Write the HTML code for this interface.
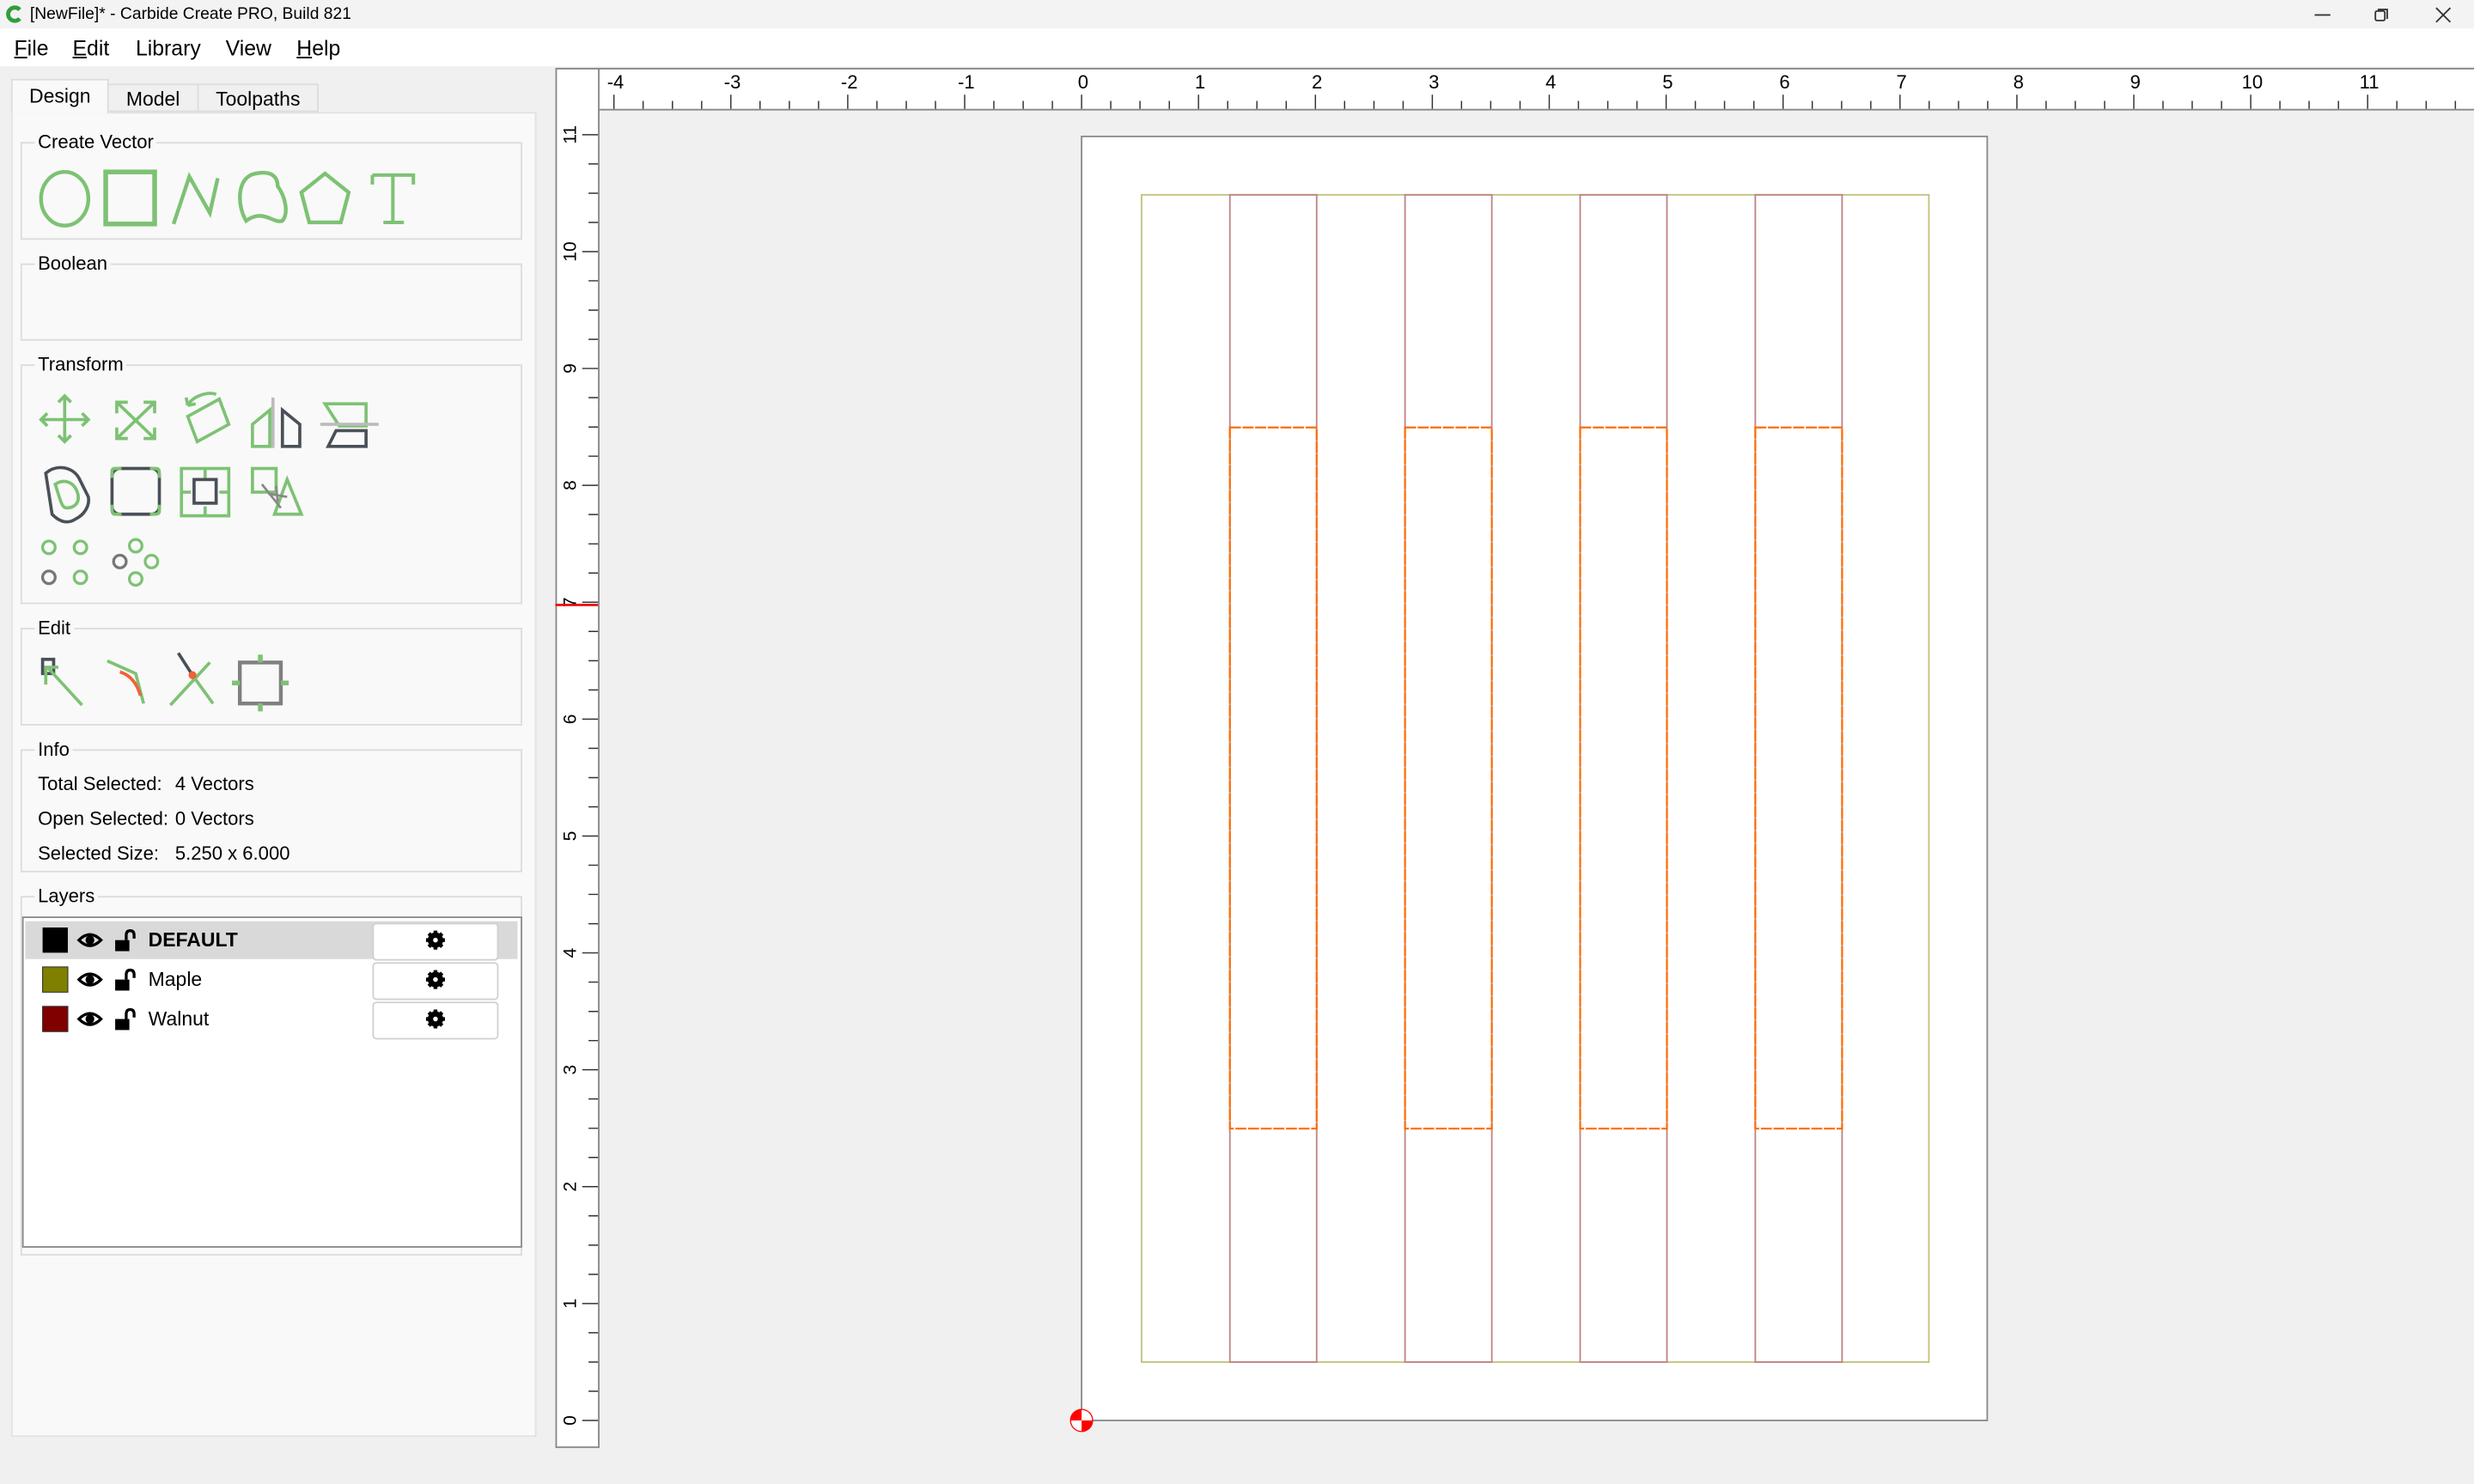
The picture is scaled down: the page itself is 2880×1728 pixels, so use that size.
<!DOCTYPE html>
<html><head><meta charset="utf-8">
<style>
*{margin:0;padding:0;box-sizing:border-box}
html,body{width:2880px;height:1728px;overflow:hidden;background:#f0f0f0}
#root{position:absolute;left:0;top:0;width:1568px;height:941px;transform:scale(1.83673);transform-origin:0 0;font-family:"Liberation Sans",sans-serif;color:#000;background:#f0f0f0}
.abs{position:absolute}
#title{left:0;top:0;width:1568px;height:18px;background:#f3f3f3;font-size:10.5px;line-height:18px}
#menu{left:0;top:18px;width:1568px;height:24px;background:#fff;font-size:13.5px;line-height:26px}
#menu span{position:absolute;top:0}
.tab{position:absolute;font-size:12.5px;text-align:center;border:1px solid #ddd}
#panel{left:7px;top:71px;width:333px;height:840px;background:#f9f9f9;border:1px solid #e2e2e2}
.grp{position:absolute;left:13px;width:318px;border:1px solid #dcdcdc}
.lbl{position:absolute;font-size:12px;background:#f9f9f9;padding:0 2px}
.info{position:absolute;font-size:12px}
</style></head><body><div id="root">
<div id="title" class="abs">
<svg class="abs" style="left:3px;top:3px" width="12" height="12" viewBox="0 0 12 12"><path d="M9.5 3.2A4.2 4.2 0 1 0 9.5 8.8" fill="none" stroke="#2f9e3a" stroke-width="2.6"/></svg>
<span class="abs" style="left:19px;top:0">[NewFile]* - Carbide Create PRO, Build 821</span>
<div class="abs" style="left:1467px;top:9px;width:10px;height:1px;background:#333"></div>
<svg class="abs" style="left:1504px;top:4px" width="11" height="11" viewBox="0 0 11 11"><rect x="1.5" y="3" width="6" height="6" rx="1" fill="none" stroke="#333"/><path d="M3.5 2.5V2h5.5v5.5h-0.5" fill="none" stroke="#333"/></svg>
<svg class="abs" style="left:1543px;top:4px" width="11" height="11" viewBox="0 0 11 11"><path d="M1 1L10 10M10 1L1 10" stroke="#333"/></svg>
</div>
<div id="menu" class="abs">
<span style="left:9px"><u>F</u>ile</span><span style="left:46px"><u>E</u>dit</span><span style="left:86px">Library</span><span style="left:143px">View</span><span style="left:188px"><u>H</u>elp</span>
</div>

<div id="panel" class="abs"></div>
<div class="tab" style="left:7px;top:50px;width:62px;height:22px;line-height:21px;background:#f9f9f9;border-bottom:none">Design</div>
<div class="tab" style="left:68px;top:53px;width:58px;height:18px;line-height:18px;background:#f0f0f0">Model</div>
<div class="tab" style="left:125px;top:53px;width:77px;height:18px;line-height:18px;background:#f0f0f0">Toolpaths</div>

<div class="grp" style="top:90px;height:62px"></div><span class="lbl" style="left:22px;top:83px">Create Vector</span>
<div class="grp" style="top:167px;height:49px"></div><span class="lbl" style="left:22px;top:160px">Boolean</span>
<div class="grp" style="top:231px;height:152px"></div><span class="lbl" style="left:22px;top:224px">Transform</span>
<div class="grp" style="top:398px;height:62px"></div><span class="lbl" style="left:22px;top:391px">Edit</span>
<div class="grp" style="top:475px;height:78px"></div><span class="lbl" style="left:22px;top:468px">Info</span>
<div class="grp" style="top:568px;height:228px"></div><span class="lbl" style="left:22px;top:561px">Layers</span>

<svg class="abs" style="left:0;top:0" width="345" height="470" viewBox="0 0 345 470" fill="none" stroke-width="2.4">
<g stroke="#7dc274">
<ellipse cx="41" cy="126" rx="15" ry="17"/>
<rect x="67" y="109" width="31" height="33" stroke-width="3"/>
<path d="M110 142L120 112L133 135L138 113"/>
<path d="M156 140C150 130 150 112 162 110C172 108 176 112 176 118C181 125 183 135 179 140C173 142 167 132 156 140Z"/>
<path d="M206 110L221 122L216 141L196 141L191 122Z"/>
<path d="M236 111H262V117M249 111V141M243 141H256M236 117V111" stroke-width="2.2"/>
</g>
<g stroke="#7dc274" stroke-width="2">
<path d="M41 251V280M26 266H56M37 255L41 251L45 255M37 276L41 280L45 276M30 262L26 266L30 270M52 262L56 266L52 270"/>
<path d="M74 255L98 278M98 255L74 278M74 262V255H81M91 255H98V262M74 271V278H81M91 278H98V271"/>
<path d="M119 270L139 259L145 275L125 286Z M119 263C122 257 132 254 137 256 M119 263L118 258M119 263L124 262" transform="translate(0,-6)"/>
<path d="M160 283V269L171 260V283Z"/>
<path d="M206 256H232V270H215Z"/>
</g>
<path d="M173 252V284" stroke="#bbb" stroke-width="2"/>
<path d="M179 260L190 269V283H179Z" stroke="#4a5058" stroke-width="2"/>
<path d="M203 269H240" stroke="#bbb" stroke-width="2"/>
<path d="M213 273H232V283H208Z" stroke="#4a5058" stroke-width="2"/>
<path d="M29 300C36 294 46 296 50 303L56 315C57 320 54 326 48 329C42 333 37 330 33 326Z" stroke="#4a5058" stroke-width="2"/>
<path d="M35 307C41 303 47 306 49 312C51 318 48 322 42 322C39 322 38 316 35 307Z" stroke="#7dc274" stroke-width="2"/>
<rect x="71" y="297" width="30" height="29" rx="5" stroke="#4a5058" stroke-width="2"/>
<path d="M71 303V299Q71 297 73 297H77M95 297H99Q101 297 101 300V303M101 320V324Q101 326 98 326H95M77 326H73Q71 326 71 323V320" stroke="#7dc274" stroke-width="2"/>
<rect x="115" y="297" width="30" height="30" stroke="#7dc274" stroke-width="2"/>
<path d="M130 297V303M130 321V327M115 312H121M139 312H145" stroke="#7dc274" stroke-width="2"/>
<rect x="123" y="304" width="14" height="15" stroke="#4a5058" stroke-width="2"/>
<rect x="160" y="297" width="15" height="15" stroke="#7dc274" stroke-width="2"/>
<path d="M182 304L191 326H174Z" stroke="#7dc274" stroke-width="2"/>
<path d="M166 307L178 322M170 313L182 315M175 308L176 318" stroke="#888" stroke-width="1.5"/>
<g stroke-width="1.8"><circle cx="31" cy="347" r="4" stroke="#7dc274"/><circle cx="51" cy="347" r="4" stroke="#7dc274"/><circle cx="31" cy="366" r="4" stroke="#777"/><circle cx="51" cy="366" r="4" stroke="#7dc274"/>
<circle cx="86" cy="346" r="4" stroke="#7dc274"/><circle cx="96" cy="356" r="4" stroke="#7dc274"/><circle cx="86" cy="367" r="4" stroke="#7dc274"/><circle cx="76" cy="356" r="4" stroke="#777"/></g>
<rect x="27" y="418" width="7" height="9" stroke="#4a5058" stroke-width="2"/>
<path d="M29 434V423H37M30 423L52 447" stroke="#7dc274" stroke-width="2"/>
<path d="M68 419L86 427L91 446" stroke="#7dc274" stroke-width="2"/>
<path d="M76 426C83 428 87 434 89 441" stroke="#f0623a" stroke-width="2"/>
<path d="M113 414L122 428" stroke="#4a5058" stroke-width="2"/>
<path d="M108 447L133 420M122 428L135 446" stroke="#7dc274" stroke-width="2"/>
<circle cx="122" cy="428" r="2.5" fill="#f0623a" stroke="none"/>
<rect x="152" y="420" width="26" height="26" stroke="#808080" stroke-width="2.4"/>
<path d="M165 415V420M165 446V451M147 433H152M178 433H183" stroke="#7dc274" stroke-width="3"/>
</svg>

<div class="info" style="left:24px;top:490px">Total Selected:</div><div class="info" style="left:111px;top:490px">4 Vectors</div>
<div class="info" style="left:24px;top:512px">Open Selected:</div><div class="info" style="left:111px;top:512px">0 Vectors</div>
<div class="info" style="left:24px;top:534px">Selected Size:</div><div class="info" style="left:111px;top:534px">5.250 x 6.000</div>

<div class="abs" style="left:14px;top:581px;width:317px;height:210px;background:#fff;border:1px solid #8a8a8a"></div>
<div class="abs" style="left:16px;top:584px;width:312px;height:24px;background:#d9d9d9"></div>
<svg class="abs" style="left:0;top:580px" width="340" height="85" viewBox="0 580 340 85">
<defs>
<g id="eye"><path d="M-7 0Q0 -7 7 0Q0 7 -7 0Z" fill="none" stroke="#000" stroke-width="1.8"/><circle r="2.8" fill="#000"/></g>
<g id="lock"><rect x="-6" y="-1" width="9" height="7" fill="#000"/><path d="M1 -1V-4Q1 -7 3.5 -7Q6 -7 6 -4V-2" fill="none" stroke="#000" stroke-width="1.8"/></g>
<g id="gear"><circle r="3.6" fill="none" stroke="#000" stroke-width="2.6"/><path d="M0 -6V6M-6 0H6M-4.2 -4.2L4.2 4.2M4.2 -4.2L-4.2 4.2" stroke="#000" stroke-width="2.4"/><circle r="1.5" fill="#fff"/></g>
</defs>
<rect x="27" y="588" width="16" height="16" fill="#000"/>
<rect x="27" y="613" width="16" height="16" fill="#808000" stroke="#333" stroke-width=".6"/>
<rect x="27" y="638" width="16" height="16" fill="#800000" stroke="#333" stroke-width=".6"/>
<use href="#eye" x="57" y="596"/><use href="#eye" x="57" y="621"/><use href="#eye" x="57" y="646"/>
<use href="#lock" x="79" y="597"/><use href="#lock" x="79" y="622"/><use href="#lock" x="79" y="647"/>
<g fill="#fff" stroke="#d0d0d0" stroke-width="1"><rect x="236.5" y="585.5" width="79" height="23" rx="2"/><rect x="236.5" y="610.5" width="79" height="23" rx="2"/><rect x="236.5" y="635.5" width="79" height="23" rx="2"/></g>
<use href="#gear" x="276" y="596"/><use href="#gear" x="276" y="621"/><use href="#gear" x="276" y="646"/>
</svg>
<div class="abs" style="left:94px;top:589px;font-size:12.5px;font-weight:bold">DEFAULT</div>
<div class="abs" style="left:94px;top:614px;font-size:12.5px">Maple</div>
<div class="abs" style="left:94px;top:639px;font-size:12.5px">Walnut</div>

<svg id="cv" class="abs" style="left:0;top:0" width="1568" height="941" viewBox="0 0 1568 941" font-family="Liberation Sans, sans-serif">
<rect x="352" y="43" width="1216" height="26" fill="#fff"/>
<rect x="352" y="43" width="27" height="875" fill="#fff"/>
<path d="M352.5 43V918M379.5 43V918M352 43.5H1568M379 69.5H1568M352 917.5H380" stroke="#888" stroke-width="1"/>
<rect x="685.5" y="86.5" width="574" height="814" fill="#fff" stroke="#8a8a8a" stroke-width="1"/>
<g id="ticks" stroke="#333" stroke-width="0.8"></g>
<g id="labs" font-size="12" fill="#000"></g>
<path d="M352 383.5H379" stroke="#e00" stroke-width="1.5"/>
<rect x="723.5" y="123.5" width="499" height="740" fill="none" stroke="#c2c27e" stroke-width="1"/>
<g fill="none" stroke="#c08484" stroke-width="1">
<rect x="779.5" y="123.5" width="55" height="740"/><rect x="890.5" y="123.5" width="55" height="740"/><rect x="1001.5" y="123.5" width="55" height="740"/><rect x="1112.5" y="123.5" width="55" height="740"/>
</g>
<g fill="none" stroke="#ff6a00" stroke-width="1.2" stroke-dasharray="7 1">
<rect x="779.5" y="271" width="55" height="444.5"/><rect x="890.5" y="271" width="55" height="444.5"/><rect x="1001.5" y="271" width="55" height="444.5"/><rect x="1112.5" y="271" width="55" height="444.5"/>
</g>
<g transform="translate(685.5,900.5)">
<circle r="7" fill="#fff" stroke="#f00" stroke-width="0.7"/>
<path d="M0 0H-7A7 7 0 0 1 0 -7Z" fill="#f00"/><path d="M0 0H7A7 7 0 0 1 0 7Z" fill="#f00"/>
</g>
</svg>
<script>
(function(){var t=document.getElementById('ticks'),l=document.getElementById('labs'),d='',s='';
var u=74.1,x0=685.5,y0=900.5;
for(var i=-16;i<=47;i++){var x=x0+i*u/4;if(x<381||x>1568)continue;var maj=(i%4===0);d+='M'+x.toFixed(1)+' '+(maj?60:64)+'V69';
if(maj){s+='<text x="'+(x+1).toFixed(1)+'" y="56" text-anchor="middle">'+(i/4)+'</text>';}}
for(var j=0;j<=46;j++){var y=y0-j*u/4;if(y<72)continue;var mj=(j%4===0);d+='M'+(mj?369:373)+' '+y.toFixed(1)+'H379';
if(mj){s+='<text transform="translate(365,'+(y).toFixed(1)+') rotate(-90)" text-anchor="middle" font-size="11.5">'+(j/4)+'</text>';}}
t.innerHTML='<path d="'+d+'"/>';l.innerHTML=s;})();
</script>
</div></body></html>
